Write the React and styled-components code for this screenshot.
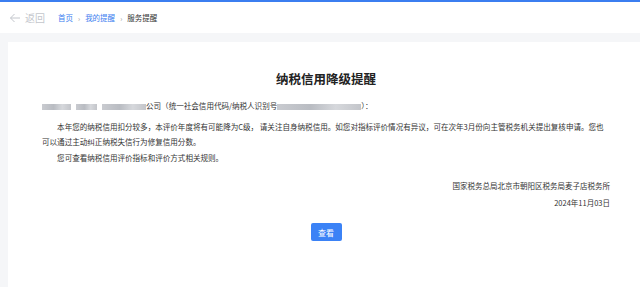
import React from 'react'
import styled, { createGlobalStyle } from 'styled-components'

const GlobalStyle = createGlobalStyle`
  html, body {
    margin: 0;
    padding: 0;
    background: #f5f6f8;
    font-family: "Noto Sans CJK SC", "Noto Sans", sans-serif;
  }
`

const Page = styled.div`
  width: 640px;
  height: 287px;
  overflow: hidden;
  display: flex;
  flex-direction: column;
  background: #f5f6f8;
  border-top: 2px solid #3b7ef0;
  box-sizing: border-box;
`

const Header = styled.div`
  height: 31px;
  background: #fff;
  display: flex;
  align-items: center;
  padding-left: 9px;
  flex-shrink: 0;
`

const Back = styled.a`
  display: flex;
  align-items: center;
  gap: 4px;
  color: #c3c6cc;
  font-size: 10px;
  cursor: pointer;
  margin-right: 13px;
`

const Crumbs = styled.div`
  display: flex;
  align-items: center;
  font-size: 7.5px;
  color: #333;
`

const Crumb = styled.a`
  color: ${p => (p.$current ? '#333' : '#3b7ef0')};
  cursor: pointer;
`

const Sep = styled.span`
  color: #999;
  margin: 0 5px;
  font-size: 7px;
`

const Card = styled.div`
  flex: 1;
  margin: 9px 0 0 8px;
  background: #fff;
  padding: 29px 30px 0 34px;
  display: flex;
  flex-direction: column;
  color: #333;
`

const Title = styled.h1`
  margin: 0;
  text-align: center;
  font-size: 12.5px;
  line-height: 16px;
  font-weight: 700;
  color: #222;
`

const Line = styled.p`
  margin: ${p => p.$mt || 0} 6px 0 0;
  font-size: 7.55px;
  line-height: 15.5px;
  text-indent: ${p => (p.$indent ? '2em' : 0)};
`

const Blur = styled.span`
  display: inline-block;
  vertical-align: middle;
  width: ${p => p.$w}px;
  height: 6px;
  margin-right: ${p => p.$gap || 0}px;
  background: linear-gradient(90deg, #c9cbd0, #b9bcc2 40%, #d6d8dc 70%, #c3c5ca);
  filter: blur(0.6px);
`

const Sign = styled.div`
  margin-top: 12px;
  text-align: right;
  font-size: 7.5px;
  line-height: 17px;
`

const Actions = styled.div`
  margin-top: 12px;
  display: flex;
  justify-content: center;
`

const Button = styled.button`
  width: 31px;
  height: 18px;
  border: none;
  border-radius: 2px;
  background: #3b82f6;
  color: #fff;
  font-family: inherit;
  font-size: 8px;
  padding: 0;
  cursor: pointer;
`

const App = () => {
  return (
    <>
      <GlobalStyle />
      <Page>
        <Header>
          <Back>
            <svg width="12" height="10" viewBox="0 0 12 10" fill="none" stroke="#c3c6cc" strokeWidth="1">
              <path d="M11 5H1.5M5.5 1L1.5 5l4 4" />
            </svg>
            返回
          </Back>
          <Crumbs>
            <Crumb>首页</Crumb>
            <Sep>›</Sep>
            <Crumb>我的提醒</Crumb>
            <Sep>›</Sep>
            <Crumb $current>服务提醒</Crumb>
          </Crumbs>
        </Header>
        <Card>
          <Title>纳税信用降级提醒</Title>
          <Line $mt="11px">
            <Blur $w={29} $gap={5} />
            <Blur $w={21} $gap={5} />
            <Blur $w={44} $gap={0} />
            公司（统一社会信用代码/纳税人识别号<Blur $w={84} />）：
          </Line>
          <Line $mt="5px" $indent>
            本年您的纳税信用扣分较多，本评价年度将有可能降为C级， 请关注自身纳税信用。如您对指标评价情况有异议，可在次年3月份向主管税务机关提出复核申请。您也可以通过主动纠正纳税失信行为修复信用分数。
          </Line>
          <Line $indent>您可查看纳税信用评价指标和评价方式相关规则。</Line>
          <Sign>
            <div>国家税务总局北京市朝阳区税务局麦子店税务所</div>
            <div>2024年11月03日</div>
          </Sign>
          <Actions>
            <Button>查看</Button>
          </Actions>
        </Card>
      </Page>
    </>
  )
}

export default App
